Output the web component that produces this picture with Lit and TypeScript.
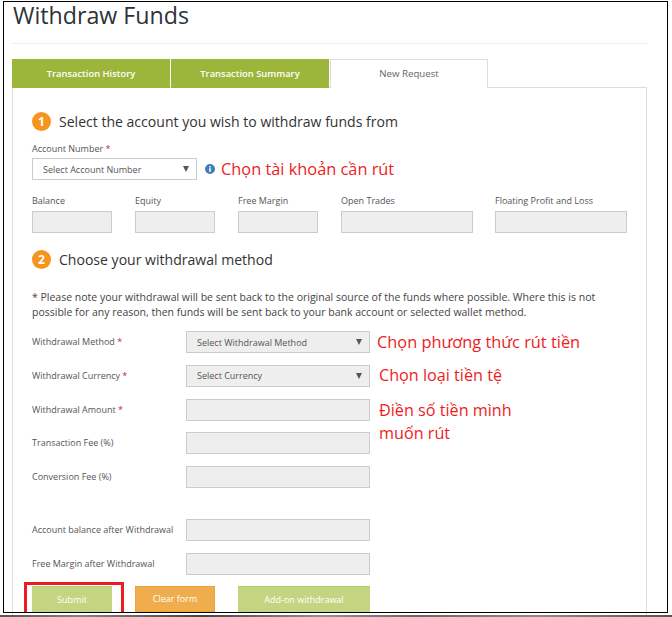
import { LitElement, html, css } from "lit";
import { customElement } from "lit/decorators.js";

@customElement("app-root")
export class AppRoot extends LitElement {
  static styles = css`
    :host { display: block; width: 672px; height: 617px; position: relative; overflow: hidden; background: #fff; font-family: "Open Sans", sans-serif; color: #444; }
    * { box-sizing: border-box; }
    .page { height: 615px; overflow: hidden; padding: 0 24px 0 12px; }
    h1 { margin: -1px 0 0; padding-left: 1px; font-size: 23.2px; line-height: 32px; font-weight: 400; color: #2c3338; height: 44px; }
    .rule { height: 1px; background: #eee; width: 636px; }
    .tabs { display: flex; gap: 1px; margin-top: 15px; height: 29px; position: relative; z-index: 1; }
    .tab { width: 158px; background: #9cb53b; color: #fff; font-size: 9.4px; font-weight: 600; display: flex; align-items: center; justify-content: center; padding-bottom: 1px; }
    .tab.on { background: #fff; color: #666; font-size: 9.7px; font-weight: 400; border: 1px solid #ddd; border-bottom: 0; }
    .panel { margin-top: -1px; width: 635px; height: 540px; border: 1px solid #ddd; padding: 24px 19px 0; }
    .head { display: flex; align-items: center; gap: 8px; height: 19px; font-size: 14.05px; font-weight: 500; color: #333; }
    .badge { width: 19px; height: 19px; border-radius: 50%; background: #f7941d; color: #fff; font-size: 12px; font-weight: 700; display: flex; align-items: center; justify-content: center; }
    .lbl { font-size: 9px; line-height: 12px; color: #555; white-space: nowrap; }
    .req { color: #c4264d; }
    .acct { margin-top: 12px; }
    .acct-row { display: flex; align-items: center; margin-top: 3px; height: 22px; }
    .sel { height: 22px; border: 1px solid #ccc; display: flex; align-items: center; justify-content: space-between; padding: 0 7px 0 10px; font-size: 9px; color: #555; }
    .sel.white { width: 165px; background: #fff; }
    .sel.grey { background: #eee; }
    .arrow { width: 0; height: 0; border-left: 3.5px solid transparent; border-right: 3.5px solid transparent; border-top: 6px solid #555; }
    .info { margin-left: 8px; width: 10px; height: 10px; flex: none; }
    .note { font-size: 16.35px; line-height: 23px; color: #ed1c24; white-space: nowrap; }
    .acct-row .note { margin-left: 6px; }
    .stats { display: flex; gap: 23px; margin-top: 15px; }
    .stat { width: 80px; }
    .stat.wide { width: 132px; }
    .stat:last-child { margin-left: -1px; }
    .box { display: block; width: 100%; height: 22px; border: 1px solid #ccc; background: #eee; padding: 0; margin: 0; }
    .stat .box { margin-top: 4px; }
    .sec2 { margin-top: 17px; }
    .copy { margin: 21px 0 0; font-size: 10.5px; line-height: 15px; color: #444; width: 580px; }
    .rows { display: flex; flex-direction: column; gap: 11.6px; margin-top: 11.4px; }
    .row { display: grid; grid-template-columns: 154px 184px auto; grid-template-rows: 22px; align-items: center; height: 22px; }
    .row .note { margin-left: 7px; }
    .row .note.b { margin-left: 9px; font-size: 16.2px; }
    .row .note.t { align-self: start; white-space: normal; width: 150px; }
    .gap { height: 8px; }
    .btns { display: flex; gap: 23px; margin-top: 11px; }
    .btn { width: 80px; height: 26px; background: #c4d581; color: #fff; font-size: 9px; font-weight: 500; display: flex; align-items: center; justify-content: center; border-top: 1px solid #b9cc70; }
    .btn.o { background: #f0ad4e; border: 1px solid #eda33c; }
    .btn.w { width: 132px; }
    .frame { position: absolute; left: 3px; top: 1px; width: 665px; height: 612px; border: 1.5px solid #000; pointer-events: none; }
    .mark { position: absolute; left: 24px; top: 582px; width: 100px; height: 30px; border: 3px solid #ed1c24; border-bottom: 0; pointer-events: none; }
    .strip { position: absolute; left: 0; right: 0; bottom: 0; height: 2px; background: linear-gradient(90deg, #555 0%, #8a8078 12%, #444 30%, #9a8f88 48%, #666 62%, #948a82 80%, #555 100%); }
  `;

  render() {
    return html`
      <div class="page">
        <h1>Withdraw Funds</h1>
        <div class="rule"></div>
        <div class="tabs">
          <div class="tab">Transaction History</div>
          <div class="tab">Transaction Summary</div>
          <div class="tab on">New Request</div>
        </div>
        <div class="panel">
          <div class="head"><span class="badge">1</span>Select the account you wish to withdraw funds from</div>
          <div class="lbl acct">Account Number <span class="req">*</span></div>
          <div class="acct-row">
            <div class="sel white">Select Account Number<span class="arrow"></span></div>
            <svg class="info" viewBox="0 0 10 10"><circle cx="5" cy="5" r="5" fill="#3f7fb5"/><rect x="4.2" y="4.2" width="1.6" height="3.6" fill="#fff"/><rect x="4.2" y="2.1" width="1.6" height="1.4" fill="#fff"/></svg>
            <span class="note">Chọn tài khoản cần rút</span>
          </div>
          <div class="stats">
            <div class="stat"><div class="lbl">Balance</div><input class="box" readonly /></div>
            <div class="stat"><div class="lbl">Equity</div><input class="box" readonly /></div>
            <div class="stat"><div class="lbl">Free Margin</div><input class="box" readonly /></div>
            <div class="stat wide"><div class="lbl">Open Trades</div><input class="box" readonly /></div>
            <div class="stat wide"><div class="lbl">Floating Profit and Loss</div><input class="box" readonly /></div>
          </div>
          <div class="head sec2"><span class="badge">2</span>Choose your withdrawal method</div>
          <p class="copy">* Please note your withdrawal will be sent back to the original source of the funds where possible. Where this is not possible for any reason, then funds will be sent back to your bank account or selected wallet method.</p>
          <div class="rows">
            <div class="row"><span class="lbl">Withdrawal Method <span class="req">*</span></span><div class="sel grey">Select Withdrawal Method<span class="arrow"></span></div><span class="note">Chọn phương thức rút tiền</span></div>
            <div class="row"><span class="lbl">Withdrawal Currency <span class="req">*</span></span><div class="sel grey">Select Currency<span class="arrow"></span></div><span class="note b">Chọn loại tiền tệ</span></div>
            <div class="row"><span class="lbl">Withdrawal Amount <span class="req">*</span></span><input class="box" readonly /><span class="note b t">Điền số tiền mình muốn rút</span></div>
            <div class="row"><span class="lbl">Transaction Fee (%)</span><input class="box" readonly /></div>
            <div class="row"><span class="lbl">Conversion Fee (%)</span><input class="box" readonly /></div>
            <div class="gap"></div>
            <div class="row"><span class="lbl">Account balance after Withdrawal</span><input class="box" readonly /></div>
            <div class="row"><span class="lbl">Free Margin after Withdrawal</span><input class="box" readonly /></div>
          </div>
          <div class="btns">
            <div class="btn">Submit</div>
            <div class="btn o">Clear form</div>
            <div class="btn w">Add-on withdrawal</div>
          </div>
        </div>
      </div>
      <div class="frame"></div>
      <div class="mark"></div>
      <div class="strip"></div>
    `;
  }
}
